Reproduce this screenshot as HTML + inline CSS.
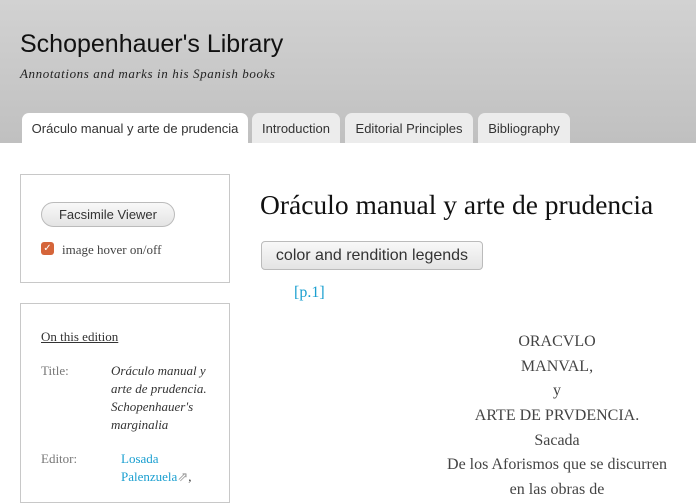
<!DOCTYPE html>
<html><head><meta charset="utf-8"><style>
*{margin:0;padding:0;box-sizing:border-box}
body{width:696px;height:488px;overflow:hidden;background:#fff;font-family:"Liberation Serif",serif;position:relative}
.hdr{position:absolute;left:0;top:0;width:696px;height:143px;background:linear-gradient(#d2d2d2,#c0c0c0)}
.t1{position:absolute;left:20px;top:30px;font:25px "Liberation Sans",sans-serif;color:#111}
.t2{position:absolute;left:20px;top:66px;font:italic 13px "Liberation Serif",serif;color:#222;letter-spacing:0.6px}
.tab{position:absolute;top:113px;height:30px;background:#ececec;border-radius:7px 7px 0 0;font:13px "Liberation Sans",sans-serif;color:#333;text-align:center;line-height:31px}
.tab.a{background:#fff}
.box{position:absolute;border:1px solid #c8c8c8;background:#fff}
.btn{position:absolute;border:1px solid #bbb;background:linear-gradient(#f8f8f8,#e4e4e4);font-family:"Liberation Sans",sans-serif;color:#333;text-align:center}
.lbl{position:absolute;font-size:13px;color:#777}
.val{position:absolute;font-size:13px;line-height:18px}
.c{position:absolute;left:400px;width:314px;text-align:center;font-size:16px;color:#444}
</style></head><body>
<div class="hdr"></div>
<div class="t1">Schopenhauer's Library</div>
<div class="t2">Annotations and marks in his Spanish books</div>
<div class="tab a" style="left:22px;width:226px">Oráculo manual y arte de prudencia</div>
<div class="tab" style="left:252px;width:88px">Introduction</div>
<div class="tab" style="left:345px;width:128px">Editorial Principles</div>
<div class="tab" style="left:478px;width:92px">Bibliography</div>

<div class="box" style="left:20px;top:174px;width:210px;height:109px"></div>
<div class="btn" style="left:41px;top:202px;width:134px;height:25px;border-radius:13px;font-size:13px;line-height:23px">Facsimile Viewer</div>
<div style="position:absolute;left:41px;top:242px;width:13px;height:13px;border-radius:3px;background:#d5653a;color:#fff;font:bold 10px 'DejaVu Sans',sans-serif;text-align:center;line-height:13px">✓</div>
<div style="position:absolute;left:62px;top:242px;font-size:13px;color:#444">image hover on/off</div>

<div class="box" style="left:20px;top:303px;width:210px;height:200px"></div>
<div style="position:absolute;left:41px;top:329px;font-size:13px;color:#333;text-decoration:underline">On this edition</div>
<div class="lbl" style="left:41px;top:363px">Title:</div>
<div class="val" style="left:111px;top:362px;font-style:italic;color:#333;width:100px">Oráculo manual y arte de prudencia. Schopenhauer's marginalia</div>
<div class="lbl" style="left:41px;top:451px">Editor:</div>
<div class="val" style="left:121px;top:450px;color:#1a9fd0">Losada<br>Palenzuela<span style="color:#999">⇗</span><span style="color:#333">,</span></div>

<div style="position:absolute;left:260px;top:189px;font-size:27.5px;color:#111">Oráculo manual y arte de prudencia</div>
<div class="btn" style="left:261px;top:241px;width:222px;height:29px;border-radius:4px;font-size:16px;line-height:27px">color and rendition legends</div>
<div style="position:absolute;left:294px;top:284px;font-size:16px;color:#1a9fd0">[p.1]</div>
<div class="c" style="top:333px">ORACVLO</div>
<div class="c" style="top:358px">MANVAL,</div>
<div class="c" style="top:382px">y</div>
<div class="c" style="top:407px">ARTE DE PRVDENCIA.</div>
<div class="c" style="top:432px">Sacada</div>
<div class="c" style="top:456px">De los Aforismos que se discurren</div>
<div class="c" style="top:481px">en las obras de</div>
</body></html>
